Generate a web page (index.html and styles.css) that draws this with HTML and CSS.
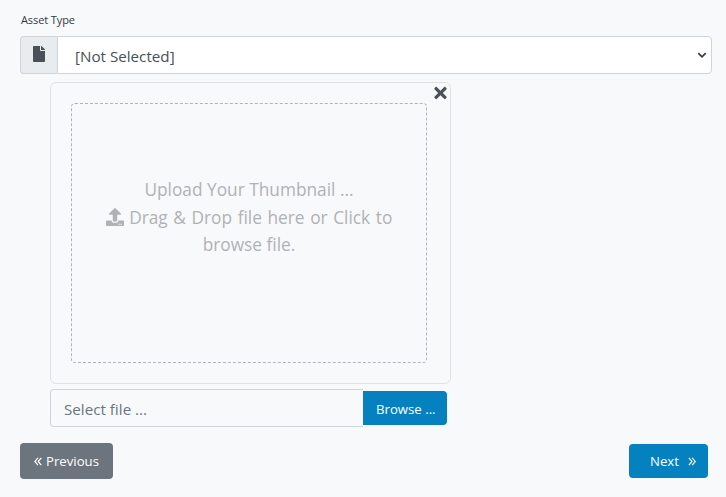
FILE: index.html
```html
<!DOCTYPE html>
<html lang="en">
<head>
<meta charset="utf-8">
<title>Asset Upload</title>
<link rel="stylesheet" href="styles.css">
</head>
<body>
<form class="form">
  <label class="field-label" for="asset">Asset Type</label>
  <div class="input-group">
    <span class="addon">
      <svg class="file-icon" viewBox="0 0 384 512"><path d="M224 136V0H24C10.700 0 0 10.700 0 24v464c0 13.300 10.700 24 24 24h336c13.300 0 24-10.700 24-24V160H248c-13.200 0-24-10.800-24-24zm160-14.100v6.100H256V0h6.100c6.400 0 12.500 2.500 17 7l97.900 98c4.500 4.500 7 10.600 7 16.900z"/></svg>
    </span>
    <div class="select-wrap">
      <select id="asset" class="select"><option>[Not Selected]</option></select>
      <svg class="chevron" viewBox="0 0 16 16"><path d="M2 5l6 6 6-6" fill="none" stroke="currentColor" stroke-width="2.600"/></svg>
    </div>
  </div>
  <div class="uploader">
    <div class="drop-card">
      <svg class="close" viewBox="0 0 352 512"><path d="M242.720 256l100.070-100.070c12.280-12.280 12.280-32.190 0-44.480l-22.240-22.240c-12.280-12.280-32.190-12.280-44.480 0L176 189.280 75.930 89.210c-12.280-12.280-32.190-12.280-44.480 0L9.210 111.450c-12.280 12.280-12.280 32.190 0 44.480L109.280 256 9.210 356.070c-12.280 12.280-12.280 32.190 0 44.480l22.240 22.240c12.280 12.280 32.200 12.280 44.480 0L176 322.720l100.070 100.070c12.280 12.280 32.200 12.280 44.480 0l22.240-22.240c12.280-12.280 12.280-32.190 0-44.480L242.720 256z"/></svg>
      <div class="drop-zone">
        <p class="drop-text">Upload Your Thumbnail ...<br><svg class="upload-icon" viewBox="0 0 512 512"><path d="M296 384h-80c-13.300 0-24-10.700-24-24V192h-87.700c-17.800 0-26.700-21.500-14.100-34.100L242.300 5.700c7.500-7.500 19.800-7.500 27.300 0l152.200 152.200c12.600 12.600 3.700 34.100-14.100 34.100H320v168c0 13.300-10.700 24-24 24zm216-8v112c0 13.300-10.700 24-24 24H24c-13.300 0-24-10.700-24-24V376c0-13.300 10.700-24 24-24h136v8c0 30.900 25.100 56 56 56h80c30.900 0 56-25.100 56-56v-8h136c13.300 0 24 10.700 24 24zm-124 88c0-11-9-20-20-20s-20 9-20 20 9 20 20 20 20-9 20-20zm64 0c0-11-9-20-20-20s-20 9-20 20 9 20 20 20 20-9 20-20z"/></svg> <span class="drag-line">Drag &amp; Drop file here or Click to</span> browse file.</p>
      </div>
    </div>
    <div class="file-row">
      <div class="file-name">Select file ...</div>
      <button type="button" class="btn btn-primary btn-browse">Browse ...</button>
    </div>
  </div>
  <div class="actions">
    <button type="button" class="btn btn-secondary"><svg class="guil" viewBox="0 0 9 10"><path d="M4.500 1L1 5l3.500 4M8.200 1L4.700 5l3.500 4"/></svg>Previous</button>
    <button type="button" class="btn btn-primary btn-next">Next<svg class="guil" viewBox="0 0 9 10"><path d="M1 1l3.500 4L1 9M4.700 1l3.500 4-3.500 4"/></svg></button>
  </div>
</form>
</body>
</html>
```
FILE: styles.css
```css
* { box-sizing: border-box; }
html, body { height: 100%; }
body {
  margin: 0;
  background: #f8f9fb;
  font-family: "Open Sans", "Noto Sans", sans-serif;
  color: #495057;
}
.form { padding: 12px 14px 0 20px; }
.field-label {
  display: block;
  height: 16px;
  font-size: 11px;
  line-height: 16px;
  color: #343a40;
  margin-bottom: 8px;
  padding-left: 1px;
  letter-spacing: -0.1px;
}
.input-group { display: flex; height: 38px; }
.addon {
  width: 37px;
  flex: none;
  display: flex;
  align-items: center;
  justify-content: center;
  background: #e9ecef;
  border: 1px solid #ced4da;
  border-right: 0;
  border-radius: 4px 0 0 4px;
}
.file-icon { width: 12px; height: 16px; fill: #495057; margin-top: -2px; }
.select-wrap { flex: 1; position: relative; }
.select {
  display: block;
  width: 100%;
  height: 100%;
  appearance: none;
  background: #fff;
  border: 1px solid #ced4da;
  border-radius: 0 4px 4px 0;
  padding: 2px 17px 0;
  font: inherit;
  font-size: 15.200px;
  color: #495057;
}
.chevron {
  position: absolute;
  right: 5px;
  top: 14px;
  width: 10px;
  height: 10px;
  color: #343a40;
}
.uploader { width: 401px; margin: 8px 0 0 30px; }
.drop-card {
  position: relative;
  height: 302px;
  border: 1px solid #dee2e6;
  border-radius: 6px;
  padding: 20px;
}
.close {
  position: absolute;
  top: 1px;
  right: 3px;
  width: 13px;
  height: 18px;
  fill: #495057;
}
.drop-zone {
  width: 356px;
  height: 260px;
  border: 1px dashed #adb5bd;
  border-radius: 4px;
  padding: 72px 20px 0;
}
.drop-text {
  margin: 0;
  text-align: center;
  font-size: 17.300px;
  line-height: 27.500px;
  color: #b0b2b5;
}
.drag-line { word-spacing: 1.100px; }
.upload-icon { width: 18px; height: 18px; fill: #b0b2b5; vertical-align: -2px; margin-right: 1px; }
.file-row { display: flex; align-items: center; width: 397px; height: 38px; margin-top: 5px; }
.file-name {
  flex: 1;
  height: 38px;
  line-height: 38px;
  padding-left: 13px;
  border: 1px solid #ced4da;
  border-right: 0;
  border-radius: 4px 0 0 4px;
  font-size: 15.200px;
  color: #6c757d;
}
.btn {
  display: inline-flex;
  align-items: center;
  border: 0;
  font: inherit;
  font-size: 13.200px;
  color: #fff;
  border-radius: 4px;
  padding: 0;
}
.btn-primary { background: #0581c0; }
.btn-secondary { background: #6c757d; width: 93px; height: 36px; padding-left: 14px; gap: 4px; }
.btn-browse { width: 84px; height: 34px; padding: 2px 0 0 13px; border-radius: 0 4px 4px 0; }
.btn-next { width: 79px; height: 34px; margin-top: 1px; padding-left: 21px; gap: 9px; }
.guil { width: 8px; height: 9px; flex: none; }
.guil path { fill: none; stroke: #fff; stroke-width: 1.300; }
.actions {
  display: flex;
  justify-content: space-between;
  align-items: flex-start;
  margin-top: 16px;
  padding-right: 4px;
}
```
